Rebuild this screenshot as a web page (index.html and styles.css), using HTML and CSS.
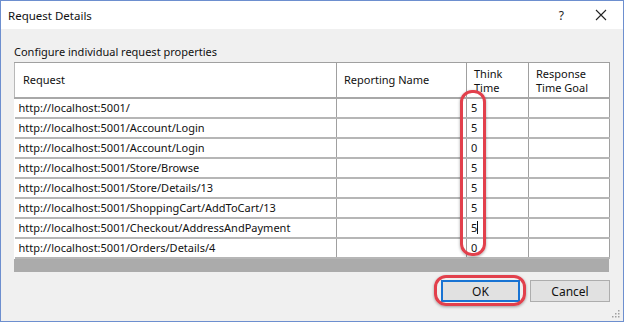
FILE: index.html
```html
<!DOCTYPE html>
<html lang="en">
<head>
    <meta charset="UTF-8">
    <title>Request Details</title>
    <link rel="stylesheet" href="styles.css">
</head>
<body>
    <div class="dialog">
        <div class="titlebar">
            <span class="title">Request Details</span>
            <span class="help">?</span>
            <svg class="close" width="12" height="12" viewBox="0 0 12 12">
                <path d="M1 1 L11 11 M11 1 L1 11" stroke="#222" stroke-width="1.1" fill="none"/>
            </svg>
        </div>
        <div class="content">
            <div class="caption">Configure individual request properties</div>
            <div class="grid-wrap">
                <table class="grid">
                    <colgroup>
                        <col class="c-req">
                        <col class="c-name">
                        <col class="c-think">
                        <col class="c-goal">
                    </colgroup>
                    <thead>
                        <tr>
                            <th class="h-req">Request</th>
                            <th class="h-name">Reporting Name</th>
                            <th class="h-think">Think<br>Time</th>
                            <th class="h-goal">Response<br>Time Goal</th>
                        </tr>
                    </thead>
                    <tbody>
                        <tr><td>http://localhost:5001/</td><td></td><td class="think">5</td><td></td></tr>
                        <tr><td>http://localhost:5001/Account/Login</td><td></td><td class="think">5</td><td></td></tr>
                        <tr><td>http://localhost:5001/Account/Login</td><td></td><td class="think">0</td><td></td></tr>
                        <tr><td>http://localhost:5001/Store/Browse</td><td></td><td class="think">5</td><td></td></tr>
                        <tr><td>http://localhost:5001/Store/Details/13</td><td></td><td class="think">5</td><td></td></tr>
                        <tr><td>http://localhost:5001/ShoppingCart/AddToCart/13</td><td></td><td class="think">5</td><td></td></tr>
                        <tr><td>http://localhost:5001/Checkout/AddressAndPayment</td><td></td><td class="think">5<span class="caret"></span></td><td></td></tr>
                        <tr><td>http://localhost:5001/Orders/Details/4</td><td></td><td class="think">0</td><td></td></tr>
                    </tbody>
                </table>
                <div class="grid-footer"></div>
                <div class="mark mark-think"></div>
            </div>
            <div class="buttons">
                <button class="btn btn-default">OK</button>
                <button class="btn">Cancel</button>
                <div class="mark mark-ok"></div>
            </div>
        </div>
        <svg class="grip" width="8" height="8" viewBox="0 0 8 8">
            <rect x="6" y="0" width="1.5" height="1.5" fill="#a0a0a0"/>
            <rect x="3" y="3" width="1.5" height="1.5" fill="#a0a0a0"/>
            <rect x="6" y="3" width="1.5" height="1.5" fill="#a0a0a0"/>
            <rect x="0" y="6" width="1.5" height="1.5" fill="#a0a0a0"/>
            <rect x="3" y="6" width="1.5" height="1.5" fill="#a0a0a0"/>
            <rect x="6" y="6" width="1.5" height="1.5" fill="#a0a0a0"/>
        </svg>
    </div>
</body>
</html>
```

FILE: styles.css
```css
body { margin: 0; background: #f0f0f0; font-family: "Noto Sans", "Open Sans", sans-serif; font-size: 11px; color: #111; }
.dialog {
    position: relative;
    width: 624px;
    height: 322px;
    box-sizing: border-box;
    border: 1px solid #6d8fcf;
    background: #f0f0f0;
}
.titlebar {
    display: flex;
    align-items: center;
    height: 28px;
    background: #fff;
    padding-left: 7px;
}
.title { flex: 1; font-size: 11.5px; }
.help { font-size: 12px; margin-right: 31px; color: #222; }
.close { margin-right: 16px; }
.content { padding: 15px 0 0 13px; }
.caption { height: 18px; line-height: 16px; }
.grid-wrap { position: relative; width: 595px; }
.grid {
    width: 595px;
    table-layout: fixed;
    border-collapse: collapse;
    background: #fff;
}
.c-req { width: 322px; }
.c-name { width: 130px; }
.c-think { width: 62px; }
.c-goal { width: 81px; }
.grid th {
    height: 33px;
    font-weight: normal;
    text-align: left;
    vertical-align: middle;
    line-height: 14px;
    padding: 0 0 0 7px;
    border: 1px solid #a0a0a0;
    border-bottom: 2px solid #a8a8a8;
}
.grid th.h-req { padding-left: 8px; border-left-color: #b8b8b8; }
.grid th.h-think, .grid th.h-goal { padding-top: 1px; }
.grid td {
    height: 18px;
    padding: 0 0 0 4px;
    border-right: 1px solid #a0a0a0;
    border-bottom: 2px solid #b6b6b6;
    white-space: nowrap;
    line-height: 18px;
}
.caret {
    display: inline-block;
    width: 1px;
    height: 13px;
    background: #111;
    vertical-align: -2px;
}
.grid-footer { height: 13px; background: #ababab; }
.mark {
    position: absolute;
    border: 3px solid #e2404c;
    box-shadow: 0 1px 3px rgba(0,0,0,0.35);
    pointer-events: none;
}
.mark-think {
    left: 446px;
    top: 28px;
    width: 20px;
    height: 160px;
    border-radius: 12px;
}
.buttons {
    position: relative;
    display: flex;
    justify-content: flex-end;
    gap: 10px;
    margin-top: 8px;
    width: 596px;
}
.btn {
    width: 80px;
    height: 22px;
    padding: 0;
    font-family: inherit;
    font-size: 12px;
    color: #111;
    background: #e1e1e1;
    border: 1px solid #adadad;
}
.btn-default { width: 79px; border: 2px solid #1873d3; }
.mark-ok {
    left: 420px;
    top: -5px;
    width: 86px;
    height: 25px;
    border-radius: 12px;
}
.grip { position: absolute; right: 3px; bottom: 3px; }
```
